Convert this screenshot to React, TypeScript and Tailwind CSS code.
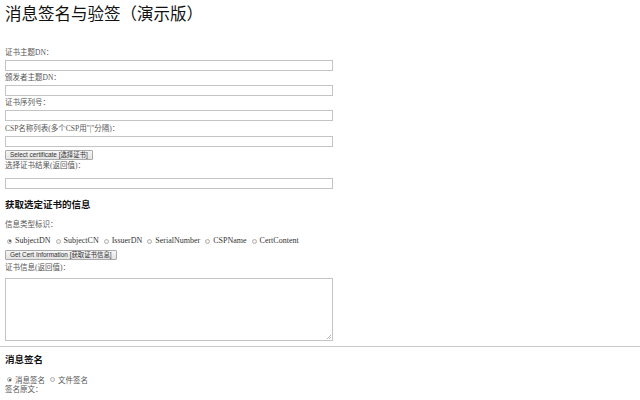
import React from "react";

const serif = "font-['Liberation_Serif','Noto_Sans_CJK_SC',serif]";
const cjk = "font-['Noto_Sans_CJK_SC','Liberation_Sans',sans-serif]";

function Label({ children, className = "" }: { children: React.ReactNode; className?: string }) {
  return (
    <div className={`h-[14px] leading-[14px] text-[7.5px] text-[#555] ${serif} ${className}`}>{children}</div>
  );
}

function Input({ className = "" }: { className?: string }) {
  return <div className={`h-[11px] w-[328px] border border-[#c4c4c4] bg-white ${className}`} />;
}

function Btn({ children, className = "" }: { children: React.ReactNode; className?: string }) {
  return (
    <div
      className={`flex w-fit h-[10px] items-center rounded-[1px] border border-[#a9a9a9] bg-gradient-to-b from-[#f6f6f6] to-[#e2e2e2] px-[4px] text-[6.4px] leading-none text-[#333] font-['Liberation_Sans','Noto_Sans_CJK_SC',sans-serif] ${className}`}
    >
      {children}
    </div>
  );
}

function Radio({ checked, label, cjkLabel }: { checked?: boolean; label: string; cjkLabel?: boolean }) {
  return (
    <span className="mr-[5px] flex items-center">
      <span className="mr-[3px] flex h-[5px] w-[5px] items-center justify-center rounded-full border border-[#b0b0b0] bg-[#f2f2f2]">
        {checked && <span className="h-[2px] w-[2px] rounded-full bg-[#444]" />}
      </span>
      <span className={cjkLabel ? `${cjk} text-[7.5px] text-[#555]` : `${serif} text-[8px] text-[#333]`}>{label}</span>
    </span>
  );
}

export default function App() {
  return (
    <div className="h-[400px] w-[640px] overflow-hidden bg-white text-[8px] leading-none">
      <div className="pl-[5px]">
        <h1 className={`pt-[5px] h-[28px] text-[16.5px] leading-[20px] text-[#111] ${serif}`}>消息签名与验签（演示版）</h1>
        <Label className="mt-[18px]">证书主题DN：</Label>
        <Input />
        <Label>颁发者主题DN：</Label>
        <Input />
        <Label>证书序列号：</Label>
        <Input />
        <Label className="mt-[1px]">CSP名称列表(多个CSP用"|"分隔)：</Label>
        <Input />
        <Btn className="mt-[3px]">Select certificate [选择证书]</Btn>
        <div className={`h-[12px] leading-[12px] text-[7.5px] text-[#555] ${serif}`}>选择证书结果(返回值)：</div>
        <Input className="mt-[6px]" />
        <div className={`mt-[9px] h-[14px] leading-[14px] text-[9.5px] font-bold text-[#111] ${serif}`}>获取选定证书的信息</div>
        <Label className="mt-[6px]">信息类型标识：</Label>
        <div className="mt-[3px] flex h-[12px] items-center pl-[2px]">
          <Radio checked label="SubjectDN" />
          <Radio label="SubjectCN" />
          <Radio label="IssuerDN" />
          <Radio label="SerialNumber" />
          <Radio label="CSPName" />
          <Radio label="CertContent" />
        </div>
        <Btn className="mt-[3px]">Get Cert Information [获取证书信息]</Btn>
        <Label className="mt-[1px]">证书信息(返回值)：</Label>
        <div className="relative mt-[3px] h-[63px] w-[328px] border border-[#c4c4c4] bg-white">
          <svg className="absolute bottom-[1px] right-[1px]" width="5" height="5" viewBox="0 0 5 5">
            <path d="M1 5 L5 1 M3 5 L5 3" stroke="#999" strokeWidth="0.7" />
          </svg>
        </div>
      </div>
      <div className="mt-[5px] h-[1px] w-full bg-[#c8c8c8]" />
      <div className="pl-[5px]">
        <div className={`mt-[6px] h-[14px] leading-[14px] text-[9.5px] font-bold text-[#111] ${serif}`}>消息签名</div>
        <div className="mt-[7px] flex h-[11px] items-center pl-[2px]">
          <Radio checked cjkLabel label="消息签名" />
          <Radio cjkLabel label="文件签名" />
        </div>
        <div className={`h-[10px] leading-[10px] text-[7.5px] text-[#555] ${serif}`}>签名原文：</div>
      </div>
    </div>
  );
}
